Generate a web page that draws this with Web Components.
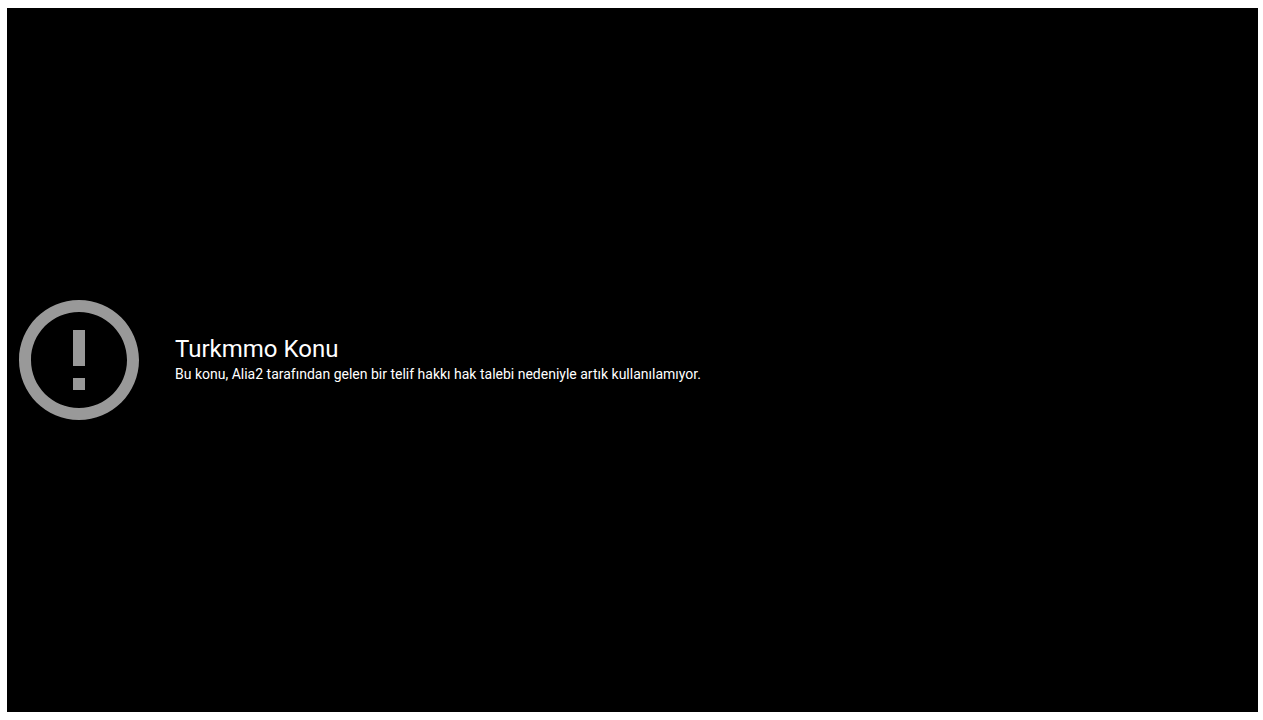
<!DOCTYPE html>
<html lang="tr">
<head>
<meta charset="utf-8">
<meta name="viewport" content="width=device-width, initial-scale=1">
<title>Turkmmo Konu</title>
<style>
  body { margin: 8px 5px 8px 7px; background: #fff; font-family: Roboto, "Liberation Sans", sans-serif; }
</style>
</head>
<body>
<error-screen>
  <alert-icon slot="icon"></alert-icon>
  <error-message>
    <span slot="title">Turkmmo Konu</span>
    <span slot="reason">Bu konu, Alia2 tarafından gelen bir telif hakkı hak talebi nedeniyle artık kullanılamıyor.</span>
  </error-message>
</error-screen>

<template id="error-screen">
  <style>
    :host { display: block; background: #000; color: #fff; }
    main { display: flex; align-items: center; gap: 24px; min-height: calc(100vh - 16px); }
  </style>
  <main><slot name="icon"></slot><slot></slot></main>
</template>

<template id="alert-icon">
  <style>
    :host { display: block; flex: none; width: 144px; height: 144px; }
    svg { display: block; width: 100%; height: 100%; fill: #999; }
  </style>
  <svg viewBox="0 0 24 24" aria-hidden="true">
    <path d="M11 15h2v2h-2zm0-8h2v6h-2zm.99-5C6.47 2 2 6.48 2 12s4.47 10 9.99 10C17.52 22 22 17.52 22 12S17.52 2 11.99 2zM12 20c-4.42 0-8-3.58-8-8s3.58-8 8-8 8 3.58 8 8-3.58 8-8 8z"/>
  </svg>
</template>

<template id="error-message">
  <style>
    :host { display: block; min-width: 0; }
    h1, p { margin: 0; font-weight: 400; }
    h1 { font-size: 24px; line-height: 28px; }
    p { font-size: 14px; line-height: 22px; }
  </style>
  <h1><slot name="title"></slot></h1>
  <p><slot name="reason"></slot></p>
</template>

<script>
  class TemplateElement extends HTMLElement {
    constructor() {
      super();
      const template = document.getElementById(this.localName);
      this.attachShadow({ mode: "open" }).append(template.content.cloneNode(true));
    }
  }
  customElements.define("error-screen", class extends TemplateElement {});
  customElements.define("alert-icon", class extends TemplateElement {});
  customElements.define("error-message", class extends TemplateElement {});
</script>
</body>
</html>
